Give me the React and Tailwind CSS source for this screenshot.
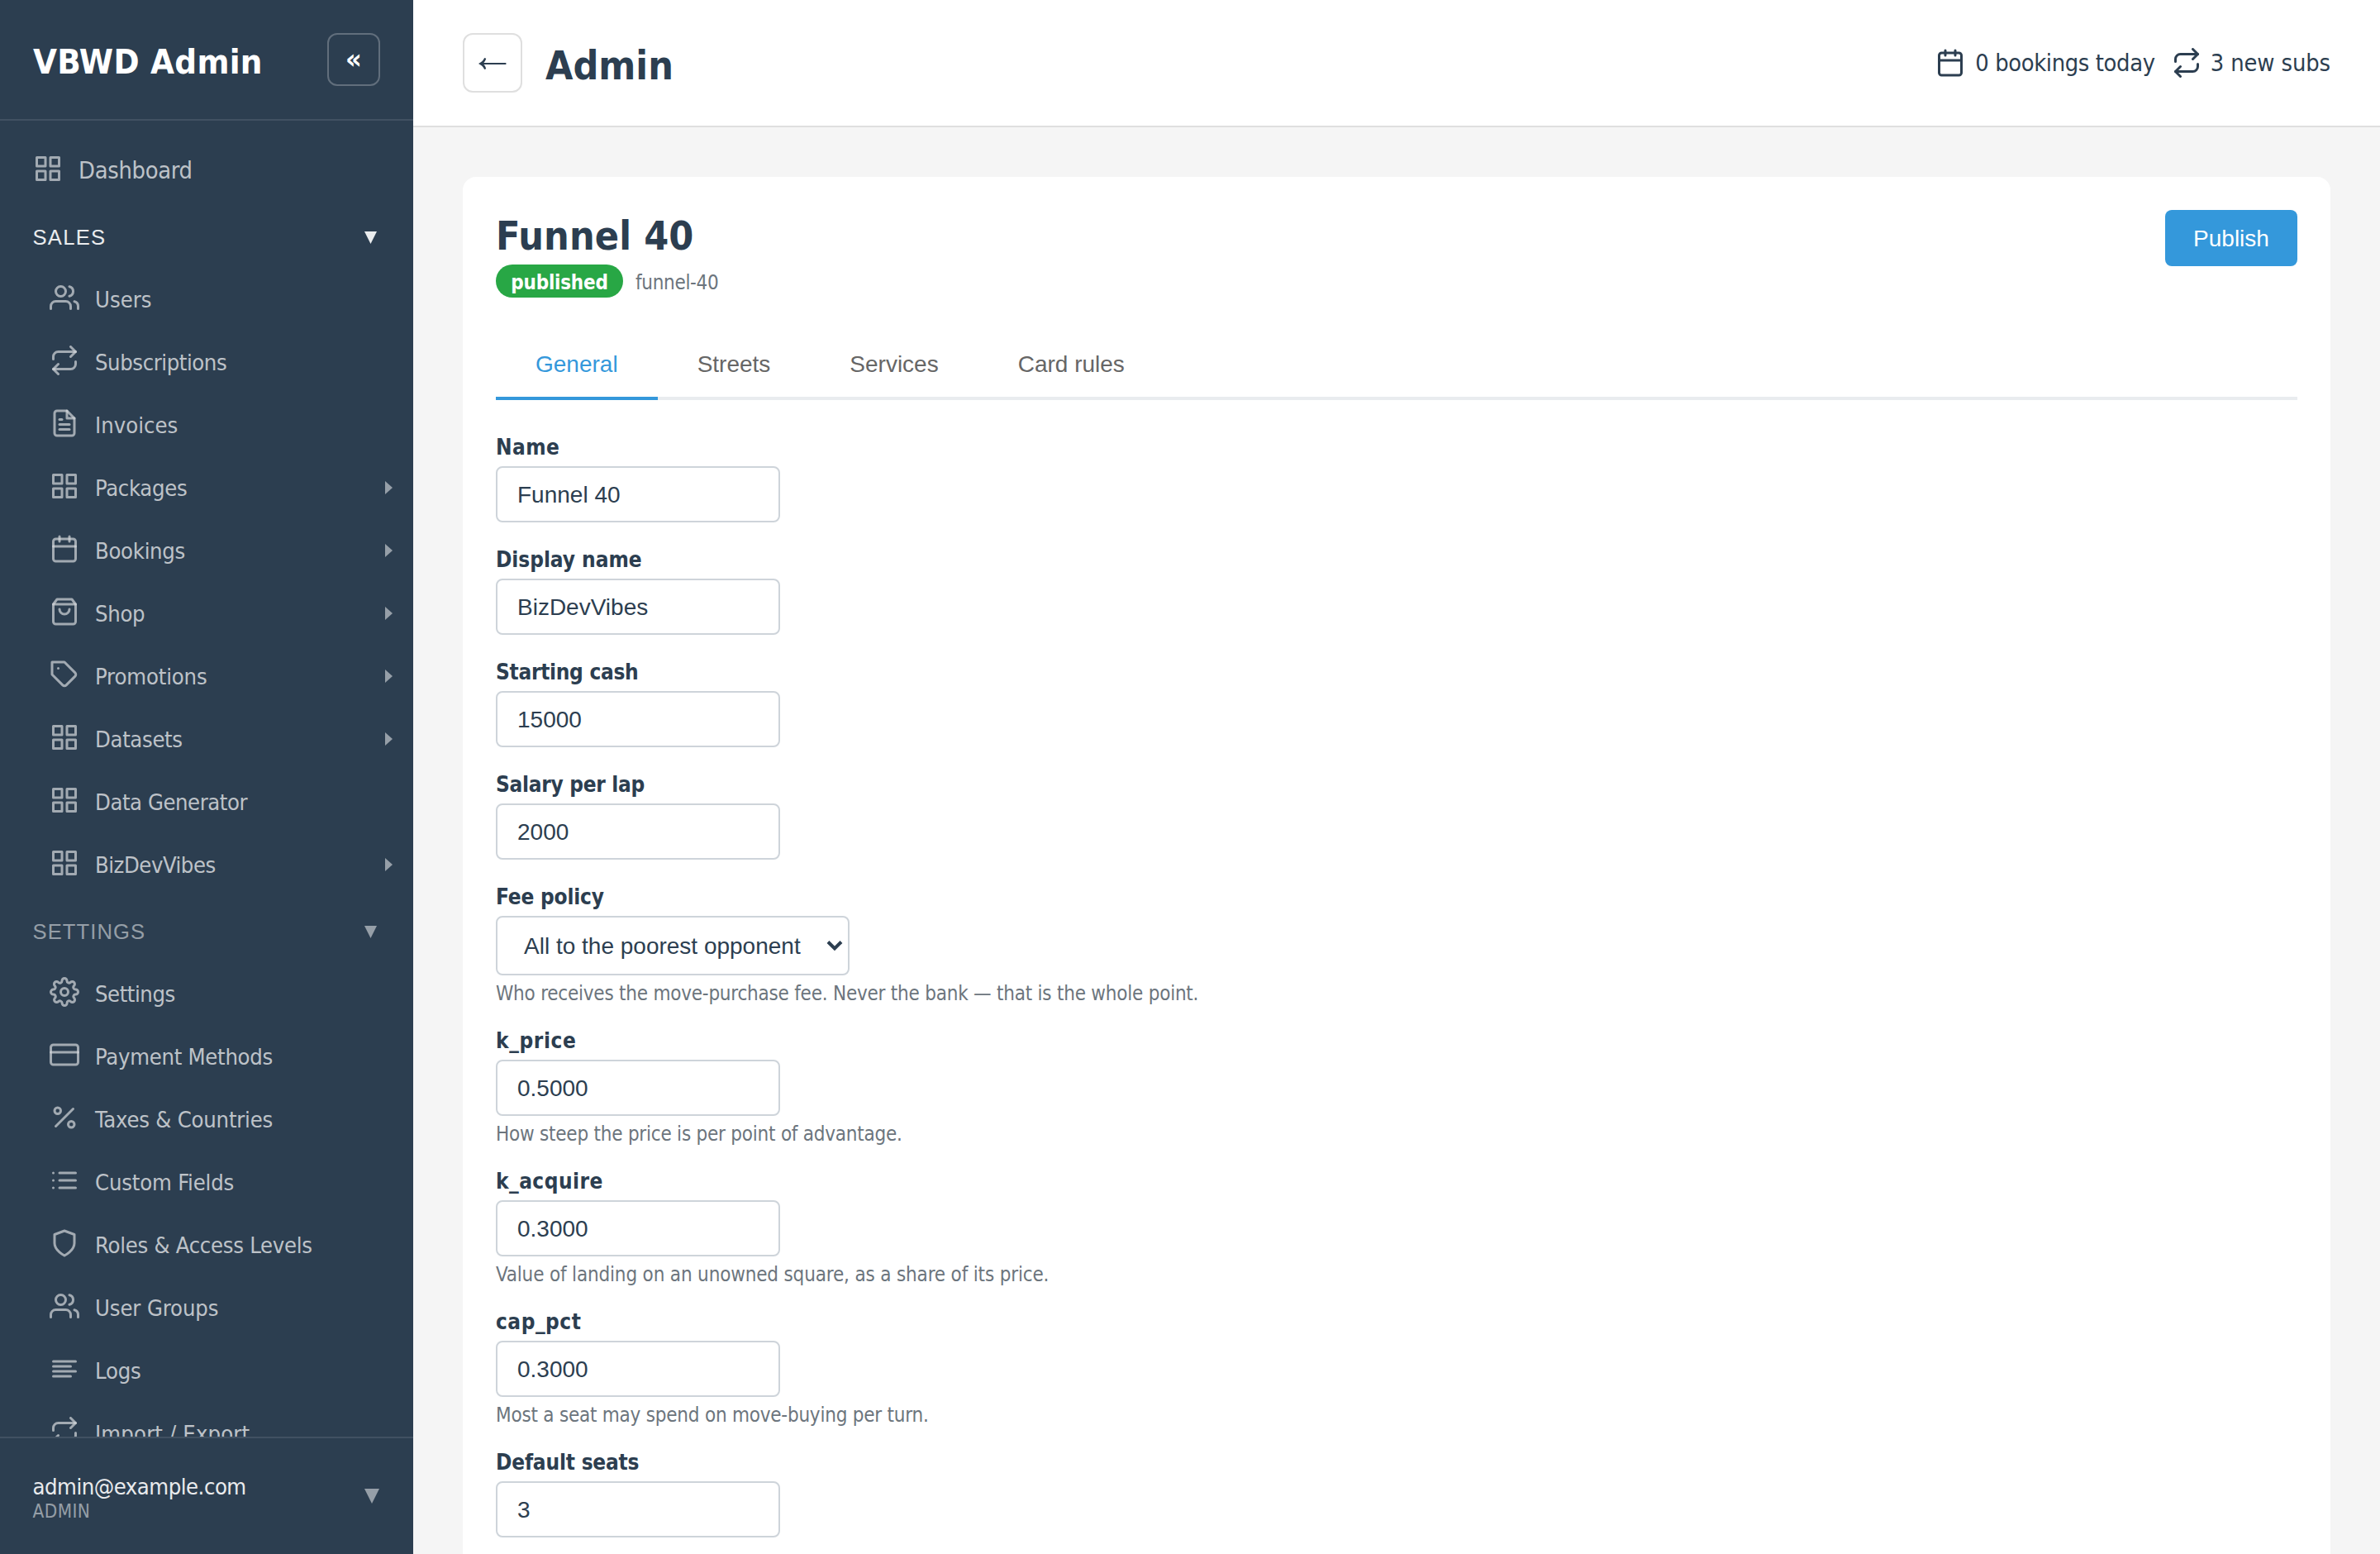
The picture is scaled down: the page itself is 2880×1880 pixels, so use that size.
import React from "react";

const ICONS = {
  grid: (
    <>
      <rect x="3" y="3" width="7" height="7" />
      <rect x="14" y="3" width="7" height="7" />
      <rect x="14" y="14" width="7" height="7" />
      <rect x="3" y="14" width="7" height="7" />
    </>
  ),
  users: (
    <>
      <path d="M17 21v-2a4 4 0 0 0-4-4H5a4 4 0 0 0-4 4v2" />
      <circle cx="9" cy="7" r="4" />
      <path d="M23 21v-2a4 4 0 0 0-3-3.87" />
      <path d="M16 3.13a4 4 0 0 1 0 7.75" />
    </>
  ),
  repeat: (
    <>
      <polyline points="17 1 21 5 17 9" />
      <path d="M3 11V9a4 4 0 0 1 4-4h14" />
      <polyline points="7 23 3 19 7 15" />
      <path d="M21 13v2a4 4 0 0 1-4 4H3" />
    </>
  ),
  file: (
    <>
      <path d="M14 2H6a2 2 0 0 0-2 2v16a2 2 0 0 0 2 2h12a2 2 0 0 0 2-2V8z" />
      <polyline points="14 2 14 8 20 8" />
      <line x1="16" y1="13" x2="8" y2="13" />
      <line x1="16" y1="17" x2="8" y2="17" />
      <polyline points="10 9 9 9 8 9" />
    </>
  ),
  calendar: (
    <>
      <rect x="3" y="4" width="18" height="18" rx="2" ry="2" />
      <line x1="16" y1="2" x2="16" y2="6" />
      <line x1="8" y1="2" x2="8" y2="6" />
      <line x1="3" y1="10" x2="21" y2="10" />
    </>
  ),
  bag: (
    <>
      <path d="M6 2L3 6v14a2 2 0 0 0 2 2h14a2 2 0 0 0 2-2V6l-3-4z" />
      <line x1="3" y1="6" x2="21" y2="6" />
      <path d="M16 10a4 4 0 0 1-8 0" />
    </>
  ),
  tag: (
    <>
      <path d="M20.59 13.41l-7.17 7.17a2 2 0 0 1-2.83 0L2 12V2h10l8.59 8.59a2 2 0 0 1 0 2.82z" />
      <line x1="7" y1="7" x2="7.01" y2="7" />
    </>
  ),
  gear: (
    <>
      <circle cx="12" cy="12" r="3" />
      <path d="M19.4 15a1.65 1.65 0 0 0 .33 1.82l.06.06a2 2 0 0 1 0 2.83 2 2 0 0 1-2.83 0l-.06-.06a1.65 1.65 0 0 0-1.82-.33 1.65 1.65 0 0 0-1 1.51V21a2 2 0 0 1-2 2 2 2 0 0 1-2-2v-.09A1.65 1.65 0 0 0 9 19.4a1.65 1.65 0 0 0-1.82.33l-.06.06a2 2 0 0 1-2.83 0 2 2 0 0 1 0-2.83l.06-.06a1.65 1.65 0 0 0 .33-1.82 1.65 1.65 0 0 0-1.51-1H3a2 2 0 0 1-2-2 2 2 0 0 1 2-2h.09A1.65 1.65 0 0 0 4.6 9a1.65 1.65 0 0 0-.33-1.82l-.06-.06a2 2 0 0 1 0-2.83 2 2 0 0 1 2.83 0l.06.06a1.65 1.65 0 0 0 1.82.33H9a1.65 1.65 0 0 0 1-1.51V3a2 2 0 0 1 2-2 2 2 0 0 1 2 2v.09a1.65 1.65 0 0 0 1 1.51 1.65 1.65 0 0 0 1.82-.33l.06-.06a2 2 0 0 1 2.83 0 2 2 0 0 1 0 2.83l-.06.06a1.65 1.65 0 0 0-.33 1.82V9a1.65 1.65 0 0 0 1.51 1H21a2 2 0 0 1 2 2 2 2 0 0 1-2 2h-.09a1.65 1.65 0 0 0-1.51 1z" />
    </>
  ),
  card: (
    <>
      <rect x="1" y="4" width="22" height="16" rx="2" ry="2" />
      <line x1="1" y1="10" x2="23" y2="10" />
    </>
  ),
  percent: (
    <>
      <line x1="19" y1="5" x2="5" y2="19" />
      <circle cx="6.5" cy="6.5" r="2.5" />
      <circle cx="17.5" cy="17.5" r="2.5" />
    </>
  ),
  list: (
    <>
      <line x1="8" y1="6" x2="21" y2="6" />
      <line x1="8" y1="12" x2="21" y2="12" />
      <line x1="8" y1="18" x2="21" y2="18" />
      <line x1="3" y1="6" x2="3.01" y2="6" />
      <line x1="3" y1="12" x2="3.01" y2="12" />
      <line x1="3" y1="18" x2="3.01" y2="18" />
    </>
  ),
  shield: <path d="M12 22s8-4 8-10V5l-8-3-8 3v7c0 6 8 10 8 10z" />,
  lines: (
    <>
      <line x1="17" y1="10" x2="3" y2="10" />
      <line x1="21" y1="6" x2="3" y2="6" />
      <line x1="21" y1="14" x2="3" y2="14" />
      <line x1="17" y1="18" x2="3" y2="18" />
    </>
  ),
};

function Icon({ name, className = "" }) {
  return (
    <svg
      viewBox="0 0 24 24"
      fill="none"
      stroke="currentColor"
      strokeWidth="2"
      strokeLinecap="round"
      strokeLinejoin="round"
      className={`size-9 shrink-0 ${className}`}
    >
      {ICONS[name]}
    </svg>
  );
}

const SALES = [
  { icon: "users", label: "Users", track: "tracking-normal" },
  { icon: "repeat", label: "Subscriptions", track: "tracking-[-0.42px]" },
  { icon: "file", label: "Invoices", track: "tracking-normal" },
  { icon: "grid", label: "Packages", track: "tracking-[-0.32px]", more: true },
  { icon: "calendar", label: "Bookings", track: "tracking-[-0.31px]", more: true },
  { icon: "bag", label: "Shop", track: "tracking-[-0.3px]", more: true },
  { icon: "tag", label: "Promotions", track: "tracking-[-0.15px]", more: true },
  { icon: "grid", label: "Datasets", track: "tracking-[-0.35px]", more: true },
  { icon: "grid", label: "Data Generator", track: "tracking-[-0.45px]" },
  { icon: "grid", label: "BizDevVibes", track: "tracking-[-0.48px]", more: true },
];

const SETTINGS = [
  { icon: "gear", label: "Settings", track: "tracking-[-0.44px]" },
  { icon: "card", label: "Payment Methods", track: "tracking-[-0.28px]" },
  { icon: "percent", label: "Taxes & Countries", track: "tracking-[-0.22px]" },
  { icon: "list", label: "Custom Fields", track: "tracking-[-0.19px]" },
  { icon: "shield", label: "Roles & Access Levels", track: "tracking-[-0.28px]" },
  { icon: "users", label: "User Groups", track: "tracking-[-0.12px]" },
  { icon: "lines", label: "Logs", track: "tracking-[-0.2px]" },
  { icon: "repeat", label: "Import / Export", track: "tracking-[0.15px]" },
];

function NavItem({ icon, label, track, more }) {
  return (
    <a className="flex h-[76px] shrink-0 items-center pr-[25px] pl-[60px] text-[27.2px] leading-none text-white/70">
      <Icon name={icon} className="opacity-80" />
      <span className={`ml-[19px] flex-1 pt-1.5 leading-[32px] ${track}`}>{label}</span>
      {more && (
        <svg viewBox="0 0 9 16" className="mt-1 h-4 w-[9px] text-white/50">
          <path d="M0 0L9 8L0 16z" fill="currentColor" />
        </svg>
      )}
    </a>
  );
}

function Section({ title, tone, items }) {
  return (
    <div className="flex flex-col">
      <button
        className={`flex h-20 shrink-0 items-center justify-between pt-2.5 pr-11 pl-[39.5px] font-['Liberation_Sans',sans-serif] text-[25.6px] ${tone}`}
      >
        <span>{title}</span>
        <svg viewBox="0 0 15 15" className="size-[15px]">
          <path d="M0 0H15L7.5 15z" fill="currentColor" />
        </svg>
      </button>
      {items.map((it) => (
        <NavItem key={it.label} {...it} />
      ))}
    </div>
  );
}

function Sidebar() {
  return (
    <aside className="flex w-[500px] shrink-0 flex-col bg-[#2c3e50] text-white">
      <div className="flex h-[146px] shrink-0 items-start justify-between border-b-2 border-white/10 px-10 pt-10">
        <h1 className="pt-[3px] text-[41.6px] leading-[64px] font-bold tracking-[0.3px]">VBWD Admin</h1>
        <button className="flex size-16 items-center justify-center rounded-xl border-2 border-white/25 pb-0.5 text-[34px] leading-none font-bold">
          «
        </button>
      </div>
      <nav className="flex min-h-0 flex-1 flex-col overflow-hidden pt-5">
        <a className="flex h-[76px] shrink-0 items-center pl-10 text-[28.8px] text-white/70">
          <Icon name="grid" className="opacity-80" />
          <span className="ml-[19px] pt-1 leading-[34px] tracking-[-0.31px]">Dashboard</span>
        </a>
        <Section title="SALES" tone="tracking-[1.28px] text-white/90" items={SALES} />
        <Section title="SETTINGS" tone="tracking-[1.1px] text-white/50" items={SETTINGS} />
      </nav>
      <div className="flex h-[142px] shrink-0 items-center justify-between border-t-2 border-white/10 pr-[41px] pl-[39.5px]">
        <div className="flex flex-col pt-1">
          <span className="text-[27.2px] leading-8 tracking-[-0.48px] text-white/90">admin@example.com</span>
          <span className="text-[22.4px] leading-[26px] tracking-[0.42px] text-white/50">ADMIN</span>
        </div>
        <svg viewBox="0 0 18 18" className="size-[18px] text-white/50">
          <path d="M0 0H18L9 18z" fill="currentColor" />
        </svg>
      </div>
    </aside>
  );
}

function TopBar() {
  return (
    <header className="flex h-[154px] shrink-0 items-center justify-between border-b-2 border-[#dfdfdf] bg-white px-[60px]">
      <div className="flex items-center gap-7">
        <button className="flex size-[72px] items-center justify-center rounded-xl border-2 border-[#dfdfdf] pt-0.5">
          <svg viewBox="0 0 34 14" className="h-3.5 w-[34px]">
            <path
              d="M0 7C3.6 5.3 6 3 7.2 0L9.2 .8C8.7 2.8 7.8 4.5 6.4 5.9H33.4V8.1H6.4C7.8 9.5 8.7 11.2 9.2 13.2L7.2 14C6 11 3.6 8.7 0 7z"
              fill="currentColor"
            />
          </svg>
        </button>
        <h2 className="pt-1.5 text-[48px] leading-[56px] font-bold">Admin</h2>
      </div>
      <div className="flex items-center text-[28.8px]">
        <Icon name="calendar" />
        <span className="ml-3 leading-[34px] tracking-[-0.37px]">0 bookings today</span>
        <Icon name="repeat" className="ml-5" />
        <span className="ml-[11px] leading-[34px] tracking-[-0.1px]">3 new subs</span>
      </div>
    </header>
  );
}

const TABS = ["General", "Streets", "Services", "Card rules"];

const FIELDS = [
  { label: "Name", value: "Funnel 40", track: "tracking-[0.4px]" },
  { label: "Display name", value: "BizDevVibes", track: "tracking-[-0.05px]" },
  { label: "Starting cash", value: "15000", track: "tracking-[-0.3px]" },
  { label: "Salary per lap", value: "2000", track: "tracking-[-0.3px]" },
  {
    label: "Fee policy",
    value: "All to the poorest opponent",
    select: true,
    track: "tracking-[-0.2px]",
    hint: "Who receives the move-purchase fee. Never the bank — that is the whole point.",
    hintTrack: "tracking-[-0.23px]",
  },
  {
    label: "k_price",
    value: "0.5000",
    track: "tracking-[0.6px]",
    hint: "How steep the price is per point of advantage.",
    hintTrack: "tracking-[-0.23px]",
  },
  {
    label: "k_acquire",
    value: "0.3000",
    track: "tracking-[0.45px]",
    hint: "Value of landing on an unowned square, as a share of its price.",
    hintTrack: "tracking-[-0.17px]",
  },
  {
    label: "cap_pct",
    value: "0.3000",
    track: "tracking-[0.5px]",
    hint: "Most a seat may spend on move-buying per turn.",
    hintTrack: "tracking-[-0.23px]",
  },
  { label: "Default seats", value: "3", track: "tracking-[-0.2px]" },
];

function Field({ label, value, track, select, hint, hintTrack }) {
  return (
    <div className="mb-6 flex flex-col items-start">
      <label className={`mb-0.5 text-[26px] leading-[42px] font-bold ${track}`}>{label}</label>
      {select ? (
        <div className="flex h-[72px] w-[428px] items-center justify-between rounded-lg border-2 border-[#ced4da] bg-white pr-1.5 pl-8 font-['Liberation_Sans',sans-serif] text-[28px]">
          <span className="pt-0.5">{value}</span>
          <svg viewBox="0 0 20 14" className="h-3.5 w-5" fill="none" stroke="currentColor" strokeWidth="4">
            <path d="M2 2.5L10 10.5L18 2.5" />
          </svg>
        </div>
      ) : (
        <div className="flex h-[68px] w-[344px] items-center rounded-lg border-2 border-[#ced4da] bg-white px-6 font-['Liberation_Sans',sans-serif] text-[28px]">
          <span className="pt-0.5">{value}</span>
        </div>
      )}
      {hint && <p className={`mt-2.5 text-[24px] leading-[24px] text-[#6c757d] ${hintTrack}`}>{hint}</p>}
    </div>
  );
}

export default function App() {
  return (
    <div className="flex h-[1880px] w-[2880px] overflow-hidden bg-[#f5f5f5] font-['DejaVu_Sans_Condensed','DejaVu_Sans',sans-serif] text-[#2c3e50]">
      <Sidebar />
      <main className="flex min-w-0 flex-1 flex-col">
        <TopBar />
        <div className="flex min-h-0 flex-1 flex-col overflow-hidden px-[60px] pt-[60px]">
          <section className="min-h-0 flex-1 rounded-t-2xl bg-white px-10 pt-10">
            <div className="flex items-start justify-between">
              <div>
                <h2 className="text-[48px] leading-[62px] font-bold tracking-[0.1px]">Funnel 40</h2>
                <div className="mt-1 flex items-center">
                  <span className="flex h-10 w-[154px] items-center justify-center rounded-full bg-[#28a745] pt-1 text-[24px] leading-[28px] font-bold tracking-[-0.24px] text-white">
                    published
                  </span>
                  <span className="ml-[15px] pt-1 text-[24px] leading-[28px] tracking-[-0.31px] text-[#6c757d]">
                    funnel-40
                  </span>
                </div>
              </div>
              <button className="flex h-[68px] w-40 items-center justify-center rounded-lg bg-[#3498db] pt-0.5 font-['Liberation_Sans',sans-serif] text-[28px] text-white">
                Publish
              </button>
            </div>
            <div className="mt-10 flex h-[84px] font-['Liberation_Sans',sans-serif] text-[28px]">
              {TABS.map((t, i) => (
                <button
                  key={t}
                  className={
                    i === 0
                      ? "border-b-4 border-[#3498db] px-12 pt-0.5 text-[#3498db]"
                      : "border-b-4 border-[#e9ecef] px-12 pt-0.5 text-[#666]"
                  }
                >
                  {t}
                </button>
              ))}
              <div className="flex-1 border-b-4 border-[#e9ecef]" />
            </div>
            <form className="mt-9">
              {FIELDS.map((f) => (
                <Field key={f.label} {...f} />
              ))}
            </form>
          </section>
        </div>
      </main>
    </div>
  );
}
